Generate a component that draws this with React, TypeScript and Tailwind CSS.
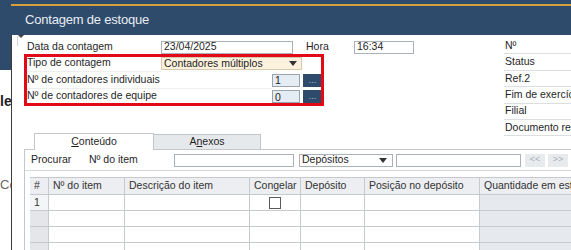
import React from "react"

const labelRow = "h-[16.5px] flex items-center"

const NumberField = ({ value }: { value: string }) => (
  <div className="flex items-center">
    <div className="w-[28px] h-[13px] bg-[#e6ecf3] border border-[#9aa4ae] flex items-center pl-[2px] leading-none">
      {value}
    </div>
    <div className="ml-[3px] w-[19px] h-[13px] bg-[#2f4b6b] flex items-end justify-center text-[#a9bdd3] text-[9px] leading-[9px] pb-[2px]">
      ...
    </div>
  </div>
)

const columns = [
  "#",
  "Nº do item",
  "Descrição do item",
  "Congelar",
  "Depósito",
  "Posição no depósito",
  "Quantidade em estoque",
]

const App = () => {
  return (
    <div className="w-[571px] h-[250px] overflow-hidden bg-white flex font-['Liberation_Sans',Arial,sans-serif] text-[10.5px] text-[#1f1f1f]">
      {/* what lies behind the window */}
      <div className="w-[11px] shrink-0 flex flex-col overflow-hidden">
        <div className="h-[70px] shrink-0 bg-[#2f4b6b]" />
        <div className="mt-[24px] text-[14px] font-bold leading-[14px] whitespace-nowrap">le</div>
        <div className="mt-[70px] text-[13px] leading-[14px] text-[#666] whitespace-nowrap">Co</div>
      </div>

      {/* window */}
      <div className="flex-1 min-w-0 flex flex-col">
        <div className="h-[4px] shrink-0 bg-[#2f4b6b]" />
        <div className="h-[2px] shrink-0 bg-[#d4a03c]" />
        <div className="h-[29px] shrink-0 bg-[#2f4b6b] flex items-center pl-[14px] pb-[2px] text-[#e8edf2] text-[13px] tracking-[-0.2px]">
          Contagem de estoque
        </div>

        <div className="flex-1 min-h-0 overflow-hidden flex flex-col bg-white border-l border-[#3c3c3c] relative">
          <div className="absolute left-[6px] top-0 w-0 h-0 border-l-[3px] border-r-[3px] border-t-[3px] border-l-transparent border-r-transparent border-t-[#444]" />
          <div className="absolute left-[5px] top-[1px] h-[10px] border-l border-[#cfd3d7]" />

          {/* header part */}
          <div className="flex shrink-0">
            <div className="flex-1 min-w-0 flex flex-col pt-[4px]">
              <div className="relative ml-[15px] flex flex-col">
                <div className={labelRow}>
                  <div className="w-[134px] h-full flex items-center border-b border-[#eceef0]">Data da contagem</div>
                  <div className="w-[132px] h-[13px] border border-[#aab1b8] flex items-center pl-[2px]">23/04/2025</div>
                  <div className="ml-[13px] w-[48px]">Hora</div>
                  <div className="w-[60px] h-[13px] border border-[#aab1b8] flex items-center pl-[2px]">16:34</div>
                </div>
                <div className={labelRow}>
                  <div className="w-[134px] h-full flex items-center border-b border-[#eceef0]">Tipo de contagem</div>
                  <div className="w-[141px] h-[13px] bg-[#fcf1dd] border border-[#d6c9ae] flex items-center justify-between pl-[2px] pr-[4px]">
                    <span>Contadores múltiplos</span>
                    <span className="w-0 h-0 border-l-[4px] border-r-[4px] border-t-[5px] border-l-transparent border-r-transparent border-t-[#333]" />
                  </div>
                </div>
                <div className={labelRow}>
                  <div className="w-[245px] h-full flex items-center border-b border-[#eceef0]">Nº de contadores individuais</div>
                  <NumberField value="1" />
                </div>
                <div className={labelRow}>
                  <div className="w-[245px] h-full flex items-center border-b border-[#eceef0]">Nº de contadores de equipe</div>
                  <NumberField value="0" />
                </div>

                {/* highlight drawn over the form */}
                <div className="absolute left-[-3px] top-[15px] w-[300px] h-[52px] border-[3px] border-[#e20a16] pointer-events-none" />
              </div>

              {/* tabs */}
              <div className="mt-[28px] ml-[22px] flex items-end relative z-10 -mb-px">
                <div className="w-[120px] h-[17px] bg-white border border-b-0 border-[#c3c7cb] flex items-center justify-center">
                  <span><span className="underline">C</span>onteúdo</span>
                </div>
                <div className="w-[107px] h-[16px] bg-[#e6e9ec] border border-l-0 border-[#c3c7cb] flex items-center justify-center">
                  <span>A<span className="underline">n</span>exos</span>
                </div>
              </div>
            </div>

            <div className="w-[67px] shrink-0 pt-[3px] flex flex-col">
              {["Nº", "Status", "Ref.2", "Fim de exercício", "Filial", "Documento ref"].map((t) => (
                <div key={t} className="h-[16.4px] flex items-center pl-[1px] border-b border-[#dcdfe2] whitespace-nowrap overflow-hidden">
                  {t}
                </div>
              ))}
            </div>
          </div>

          {/* content panel */}
          <div className="flex-1 min-h-0 overflow-hidden ml-[12px] border-l border-t border-[#c3c7cb] flex flex-col">
            <div className="h-[21px] shrink-0 flex items-center border-b border-[#d6d9dc] pl-[6px]">
              <div className="w-[58px] shrink-0">Procurar</div>
              <div className="w-[85px] shrink-0">Nº do item</div>
              <div className="w-[120px] shrink-0 h-[13px] border border-[#aab1b8]" />
              <div className="ml-[5px] w-[94px] shrink-0 h-[13px] border border-[#aab1b8] flex items-center justify-between pl-[2px] pr-[5px]">
                <span>Depósitos</span>
                <span className="w-0 h-0 border-l-[4px] border-r-[4px] border-t-[5px] border-l-transparent border-r-transparent border-t-[#333]" />
              </div>
              <div className="ml-[3px] w-[125px] shrink-0 h-[13px] border border-[#aab1b8]" />
              <div className="ml-[4px] w-[20px] shrink-0 h-[13px] bg-[#e8ebee] text-[#a9b1ba] flex items-center justify-center text-[9px]">&lt;&lt;</div>
              <div className="ml-[3px] w-[20px] shrink-0 h-[13px] bg-[#e8ebee] text-[#a9b1ba] flex items-center justify-center text-[9px]">&gt;&gt;</div>
            </div>

            <div className="mt-[6px] ml-[5px] grid grid-cols-[19px_76px_125px_51px_64px_115px_130px] text-[#333]">
              {columns.map((c) => (
                <div key={c} className="h-[18px] bg-[#eceef1] border-t border-b border-r border-[#c6cace] flex items-center pl-[4px] whitespace-nowrap overflow-hidden">
                  {c}
                </div>
              ))}
              {[0, 1, 2, 3].map((r) => (
                <React.Fragment key={r}>
                  <div className={`h-[16px] border-b border-r border-[#c6cace] flex items-center pl-[4px] ${r === 0 ? "bg-[#f4f5f6]" : "bg-[#e4e6e9]"}`}>
                    {r === 0 ? "1" : ""}
                  </div>
                  <div className="h-[16px] border-b border-r border-[#c6cace]" />
                  <div className="h-[16px] border-b border-r border-[#c6cace]" />
                  <div className="h-[16px] border-b border-r border-[#c6cace] flex items-center justify-center">
                    {r === 0 && <div className="w-[12px] h-[12px] border border-[#5a5a5a] bg-white" />}
                  </div>
                  <div className="h-[16px] border-b border-r border-[#c6cace]" />
                  <div className="h-[16px] border-b border-r border-[#c6cace]" />
                  <div className="h-[16px] border-b border-r border-[#c6cace] bg-[#e6eaee]" />
                </React.Fragment>
              ))}
            </div>
          </div>
        </div>
      </div>
    </div>
  )
}

export default App
